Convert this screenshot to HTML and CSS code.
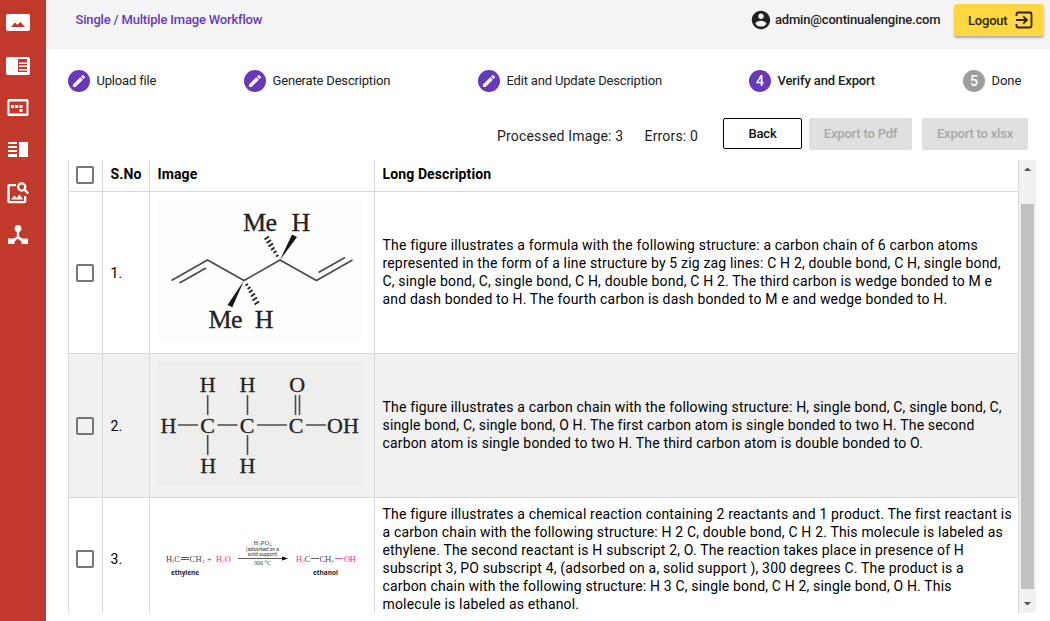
FILE: index.html
```html
<!DOCTYPE html>
<html lang="en">
<head>
<meta charset="utf-8">
<title>Image Workflow</title>
<link rel="stylesheet" href="styles.css">
</head>
<body>
<div class="app">
  <nav class="sidebar">
    <svg width="46" height="44" viewBox="0 0 46 44"><rect x="6" y="14" width="24" height="17" rx="2"/><path class="cut" d="M11 27l4-4.500 2.300 2.300L20.500 22 25 27z"/></svg>
    <svg width="46" height="44" viewBox="0 44 46 44"><rect x="6" y="57" width="24" height="18" rx="2"/><path class="cut" d="M18 59h9v13h-9z"/><path d="M19 62.500h8v1.500h-8zm0 3h8V67h-8zm0 3.500h8v1.500h-8z"/></svg>
    <svg width="46" height="41" viewBox="0 88 46 41"><rect x="7.500" y="99" width="21" height="17" rx="1.500"/><path class="cut" d="M9.500 101.500h17v12h-17z"/><path d="M11 105h3v3h-3zm4.200 0h3v3h-3zm4.300 0h3v3h-3zm0 4h3v3h-3z"/></svg>
    <svg width="46" height="42" viewBox="0 129 46 42"><path d="M8 142h9v2H8zm0 4h9v2H8zm0 4h9v2H8zm0 4h9v3H8zM19 142h9v15h-9z"/></svg>
    <svg width="46" height="44" viewBox="0 171 46 44"><path d="M9.500 184H16v2.200H9.700V201H24v-5h2.300v5.200q0 2-2 2h-15q-2 0-2-2V186q0-2 2.200-2z"/><path d="M11 199.500l3.300-4 2.400 2.400 2.700-3.400 3.800 5z"/><circle class="ring" cx="21.700" cy="187" r="3.600"/><path class="stroke" d="M24.500 189.800l3.700 3.700"/></svg>
    <svg width="46" height="42" viewBox="0 215 46 42"><path class="stroke" d="M18 228v9l-6.500 5.500M18 237l6.500 5.500"/><circle cx="18" cy="228.500" r="3.400"/><path d="M8 238.500h6.500v5.500H8zm13.500 0H28v5.500h-6.500z"/></svg>
  </nav>
  <div class="page">
    <header class="topbar">
      <span class="title">Single / Multiple Image Workflow</span>
      <svg class="avatar" width="22" height="22" viewBox="0 0 24 24"><path d="M12 2C6.480 2 2 6.480 2 12s4.480 10 10 10 10-4.480 10-10S17.520 2 12 2zm0 3c1.660 0 3 1.340 3 3s-1.340 3-3 3-3-1.340-3-3 1.340-3 3-3zm0 14.200c-2.500 0-4.710-1.280-6-3.220.03-1.990 4-3.080 6-3.080 1.990 0 5.970 1.090 6 3.080-1.290 1.940-3.500 3.220-6 3.220z"/></svg>
      <span class="email">admin@continualengine.com</span>
      <button class="logout"><span>Logout</span><svg width="18" height="18" viewBox="0 0 18 18"><path d="M1.500 5V3q0-1.500 1.500-1.500h12q1.500 0 1.500 1.500v12q0 1.500-1.500 1.500H3q-1.500 0-1.500-1.500v-2M1 9h10.500M8.200 5.300L12 9l-3.800 3.700"/></svg></button>
    </header>
    <div class="stepper">
      <div class="step s1"><i><svg width="16" height="16" viewBox="0 0 24 24"><path d="M3 17.250V21h3.750L17.810 9.940l-3.750-3.750L3 17.250zM20.710 7.040a1 1 0 0 0 0-1.410l-2.340-2.340a1 1 0 0 0-1.410 0l-1.830 1.830 3.750 3.750 1.830-1.830z"/></svg></i><span>Upload file</span></div>
      <div class="step s2"><i><svg width="16" height="16" viewBox="0 0 24 24"><path d="M3 17.250V21h3.750L17.810 9.940l-3.750-3.750L3 17.250zM20.710 7.040a1 1 0 0 0 0-1.410l-2.340-2.340a1 1 0 0 0-1.410 0l-1.830 1.830 3.750 3.750 1.830-1.830z"/></svg></i><span>Generate Description</span></div>
      <div class="step s3"><i><svg width="16" height="16" viewBox="0 0 24 24"><path d="M3 17.250V21h3.750L17.810 9.940l-3.750-3.750L3 17.250zM20.710 7.040a1 1 0 0 0 0-1.410l-2.340-2.340a1 1 0 0 0-1.410 0l-1.830 1.830 3.750 3.750 1.830-1.830z"/></svg></i><span>Edit and Update Description</span></div>
      <div class="step s4"><i>4</i><span>Verify and Export</span></div>
      <div class="step s5"><i>5</i><span>Done</span></div>
    </div>
    <div class="actions">
      <span class="count processed">Processed Image: 3</span>
      <span class="count errors">Errors: 0</span>
      <button class="btn back">Back</button>
      <button class="btn pdf" disabled>Export to Pdf</button>
      <button class="btn xlsx" disabled>Export to xlsx</button>
    </div>
    <div class="viewport">
      <div class="table">
        <div class="row head">
          <div class="cell"><b class="box"></b></div><div class="cell no">S.No</div><div class="cell">Image</div><div class="cell">Long Description</div>
        </div>
        <div class="row r1">
          <div class="cell"><b class="box"></b></div><div class="cell no">1.</div>
          <div class="cell pic"><svg width="224" height="161" viewBox="150 192 224 161">
            <rect x="157" y="199" width="206" height="141" fill="#fdfdfc"/>
            <g class="bond"><path d="M171.500 280.500L207.500 260 244 280.500 280 260 316.500 280.500 352.500 260M179.500 283L206 268M318.500 272.500L345 257.500"/></g>
            <path fill="#161616" d="M244 280.500L227.500 305l4.800 2.300zM280 260l12-25.500 5 2.500z"/>
            <path class="hash" d="M264.500 239.500l4.500-3M266.500 243l4.500-3M268.500 246.500l4.500-3M271 250l3.500-2.500M273.500 253l3-2M276 256.500l2.500-1.500M245.500 285.500l2.500-1.500M247.500 289l3-2M249 292.500l3.500-2.500M251 296.500l4-3M252.500 300.500l4.500-3M254.500 304.500l4.500-3"/>
            <g class="chem big"><text x="243" y="231" textLength="34">Me</text><text x="291.500" y="230.500">H</text><text x="208.500" y="328" textLength="34">Me</text><text x="254.800" y="328">H</text></g>
          </svg></div>
          <div class="cell desc"><p>The figure illustrates a formula with the following structure: a carbon chain of 6 carbon atoms<br>represented in the form of a line structure by 5 zig zag lines: C H 2, double bond, C H, single bond,<br>C, single bond, C, single bond, C H, double bond, C H 2. The third carbon is wedge bonded to M e<br>and dash bonded to H. The fourth carbon is dash bonded to M e and wedge bonded to H.</p></div>
        </div>
        <div class="row r2">
          <div class="cell"><b class="box"></b></div><div class="cell no">2.</div>
          <div class="cell pic"><svg width="224" height="143" viewBox="150 354 224 143">
            <rect x="157" y="361" width="207" height="124" fill="#eeeeec"/>
            <g class="bond"><path d="M178 425h20M217.500 425h20M257 425h30M306 425h20M207.700 395v20M247.500 395v20M295.500 395v20M299.500 395v20M207.700 435v20M247.500 435v20"/></g>
            <g class="chem mid"><text x="207.700" y="392">H</text><text x="247.500" y="392">H</text><text x="297.300" y="392">O</text><text x="168.500" y="433">H</text><text x="207.500" y="433">C</text><text x="247" y="433">C</text><text x="296" y="433">C</text><text x="343" y="433" textLength="32">OH</text><text x="208.200" y="473">H</text><text x="247.500" y="473">H</text></g>
          </svg></div>
          <div class="cell desc"><p>The figure illustrates a carbon chain with the following structure: H, single bond, C, single bond, C,<br>single bond, C, single bond, O H. The first carbon atom is single bonded to two H. The second<br>carbon atom is single bonded to two H. The third carbon atom is double bonded to O.</p></div>
        </div>
        <div class="row r3">
          <div class="cell"><b class="box"></b></div><div class="cell no">3.</div>
          <div class="cell pic"><svg width="224" height="122" viewBox="150 498 224 122">
            <g class="chem small">
              <text x="166" y="561.500" textLength="14">H<tspan font-size="5" dy="1.500">2</tspan><tspan dy="-1.500">C</tspan></text><text x="189.500" y="561.500" textLength="15">CH<tspan font-size="5" dy="1.500">2</tspan></text><text x="207" y="561.500">+</text>
              <text class="pink" x="216" y="561.500" textLength="15">H<tspan font-size="5" dy="1.500">2</tspan><tspan dy="-1.500">O</tspan></text>
              <text class="pink" x="296" y="561.500">H<tspan font-size="5" dy="1.500">3</tspan></text><text x="304.500" y="561.500">C</text><text x="319.500" y="561.500" textLength="14">CH<tspan font-size="5" dy="1.500">2</tspan></text><text class="pink" x="344" y="561.500" textLength="12">OH</text>
              <text x="253.500" y="544.500" font-size="6.500" textLength="18">H<tspan font-size="4" dy="1">3</tspan><tspan dy="-1">PO</tspan><tspan font-size="4" dy="1">4</tspan></text><text x="254" y="564.500" font-size="6" textLength="17">300 °C</text>
            </g>
            <g class="note"><text x="246" y="550.500" textLength="33">(adsorbed on a</text><text x="247.500" y="556" textLength="30">solid support)</text></g>
            <g class="name"><text x="171" y="575" textLength="28">ethylene</text><text x="313" y="575" textLength="25">ethanol</text></g>
            <path class="thin" d="M181 557.500h8M181 559.500h8M238 558.500h46M311 558.500h8"/><path d="M282 556.500l6 2-6 2z"/><path class="thin pinkline" d="M335 558.500h8"/>
          </svg></div>
          <div class="cell desc"><p>The figure illustrates a chemical reaction containing 2 reactants and 1 product. The first reactant is<br>a carbon chain with the following structure: H 2 C, double bond, C H 2. This molecule is labeled as<br>ethylene. The second reactant is H subscript 2, O. The reaction takes place in presence of H<br>subscript 3, PO subscript 4, (adsorbed on a, solid support ), 300 degrees C. The product is a<br>carbon chain with the following structure: H 3 C, single bond, C H 2, single bond, O H. This<br>molecule is labeled as ethanol.</p></div>
        </div>
      </div>
      <div class="scrollbar">
        <svg width="17" height="44" viewBox="0 0 17 44"><path d="M5 11h7L8.500 7.500z"/></svg>
        <div class="thumb"></div>
        <svg width="17" height="24" viewBox="0 0 17 24"><path d="M5 13h7l-3.500 3.500z"/></svg>
      </div>
    </div>
  </div>
</div>
</body>
</html>
```
FILE: styles.css
```css
* { box-sizing: border-box; }
body { margin: 0; font-family: Roboto, sans-serif; font-size: 14px; color: #212121; background: #fff; }
button { font-family: inherit; padding: 0; border: 0; }
svg { display: block; flex: none; }
.app { display: flex; width: 1050px; height: 621px; overflow: hidden; }
.sidebar { width: 46px; flex: none; background: #c1392b; fill: #fff; }
.sidebar .cut { fill: #c1392b; }
.sidebar .ring, .sidebar .stroke { fill: none; stroke: #fff; stroke-width: 2.300; }
.page { flex: 1; min-width: 0; }
.topbar { height: 49px; background: #f4f4f4; display: flex; align-items: flex-start; line-height: 20px; font-size: 13px; font-weight: 500; letter-spacing: -.18px; }
.title { flex: none; width: 674px; padding: 10px 0 0 29.500px; color: #673ab7; }
.avatar { margin: 9px 3px 0 30px; fill: #212121; }
.email { width: 179px; padding-top: 10px; white-space: nowrap; }
.logout { flex: none; display: flex; align-items: center; width: 90px; height: 32px; margin-top: 4px; padding-left: 14px; gap: 7px; background: #ffd740; border-radius: 3px; font-size: 13px; font-weight: 500; letter-spacing: -.2px; color: #2b2508; box-shadow: 0 2px 2px rgba(0,0,0,.28); }
.logout svg { fill: none; stroke: #2b2508; stroke-width: 1.800; }
.stepper { height: 64px; display: flex; align-items: center; padding-left: 22px; font-size: 13px; letter-spacing: -.18px; }
.step { display: flex; align-items: center; gap: 6.500px; flex: none; white-space: nowrap; }
.step span { padding-bottom: 2px; }
.step i { display: grid; place-items: center; width: 22px; height: 22px; border-radius: 50%; background: #673ab7; color: #fff; font-style: normal; font-size: 14px; }
.step svg { fill: #fff; }
.s1 { width: 176px; }
.s2 { width: 234px; }
.s3 { width: 271px; }
.s4 { width: 214px; font-weight: 500; letter-spacing: -.13px; }
.s5 { letter-spacing: -.05px; }
.s5 i { background: #9e9e9e; font-weight: 500; }
.actions { height: 47px; display: flex; align-items: flex-start; padding: 5px 0 0 451px; white-space: nowrap; }
.count { padding-top: 9px; line-height: 18px; letter-spacing: .18px; flex: none; }
.processed { width: 147.500px; }
.errors { width: 78.500px; }
.btn { height: 32px; flex: none; border-radius: 2px; font-size: 13px; font-weight: 500; letter-spacing: -.2px; }
.back { width: 79px; height: 31px; background: #fff; border: 1px solid #000; color: #111; }
.pdf { width: 103px; margin: 0 10px 0 7px; padding-bottom: 1px; background: #e0e0e0; color: #a8a8a8; }
.xlsx { width: 106px; padding-bottom: 1px; background: #e0e0e0; color: #a8a8a8; }
.viewport { display: flex; margin-left: 22px; width: 968px; height: 453px; overflow: hidden; }
.table { width: 951px; border-left: 1px solid #d9d9d9; color: #000; }
.row { display: grid; grid-template-columns: 34px 47px 225px 644px; border-bottom: 1px solid #d9d9d9; }
.cell { display: flex; align-items: center; padding-left: 7px; border-right: 1px solid #d9d9d9; white-space: nowrap; letter-spacing: .168px; }
.cell + .cell { padding-left: 7.500px; }
.head { height: 32px; }
.head .cell { font-weight: 700; padding-bottom: 3px; letter-spacing: .12px; }
.head .cell:first-child { padding-bottom: 2px; }
.r1 { height: 162px; }
.r2 { height: 144px; background: #f1f1f1; }
.r3 { height: 123px; }
.r1 .desc, .r2 .desc { padding-bottom: 2px; }
.cell.pic { padding: 0; }
.box { width: 18px; height: 18px; border: 2px solid #757575; border-radius: 2px; }
.desc p { margin: 0; line-height: 18px; }
.scrollbar { width: 17px; background: #f1f1f1; fill: #505050; }
.thumb { width: 13px; height: 385px; margin-left: 2px; background: #c1c1c1; }
.bond { stroke: #4a4a4a; stroke-width: 1.600; fill: none; }
.hash { stroke: #222; stroke-width: 1.800; }
.chem { font-family: "Liberation Serif", serif; fill: #222; letter-spacing: 0; }
.big { font-size: 26px; stroke: #222; stroke-width: .3; }
.mid { font-size: 22px; text-anchor: middle; stroke: #222; stroke-width: .3; }
.small { font-size: 8.500px; fill: #444; }
.note { font-size: 5px; fill: #333; letter-spacing: 0; }
.name { font-family: "Open Sans", sans-serif; font-size: 6.500px; font-weight: 700; fill: #222; letter-spacing: 0; }
.thin { stroke: #333; stroke-width: .8; }
.pink { fill: #ee2a8c; }
.pinkline { stroke: #ee2a8c; }
```
